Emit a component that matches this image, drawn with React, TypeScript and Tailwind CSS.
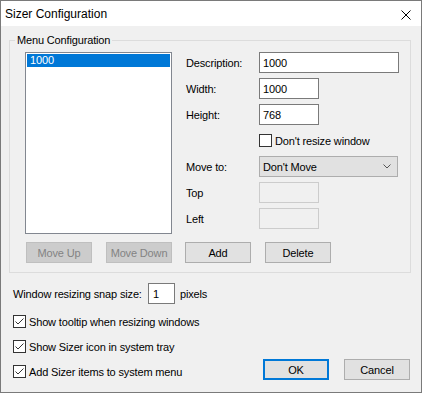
import React from "react";

const Check = ({ checked }: { checked: boolean }) => (
  <div className="w-[13px] h-[13px] border border-[#333333] bg-white flex items-center justify-center shrink-0">
    {checked && (
      <svg width="11" height="11" viewBox="0 0 11 11">
        <path d="M1.5 5.5 L4 8 L9.5 2.5" fill="none" stroke="#333333" strokeWidth="1" />
      </svg>
    )}
  </div>
);

const Btn = ({ label, disabled, w = "w-[66px]", cls = "" }: { label: string; disabled?: boolean; w?: string; cls?: string }) => (
  <div
    className={
      "h-[21px] flex items-center justify-center shrink-0 border " +
      w +
      " " +
      (disabled ? "bg-[#cccccc] border-[#bfbfbf] text-[#838383]" : "bg-[#e1e1e1] border-[#adadad] text-black") +
      " " +
      cls
    }
  >
    {label}
  </div>
);

export default function App() {
  return (
    <div
      className="w-[422px] h-[393px] border border-[#7a7a7a] bg-[#f0f0f0] flex flex-col text-[11px] leading-[14px] tracking-[-0.15px] text-black"
      style={{ fontFamily: '"Liberation Sans", Arial, sans-serif' }}
    >
      {/* Title bar */}
      <div className="h-[25px] bg-white flex items-center pl-[4px] pr-[10px] shrink-0">
        <span className="text-[12px] leading-[16px] mt-[1px] tracking-normal">Sizer Configuration</span>
        <svg className="ml-auto mt-[2px]" width="10" height="10" viewBox="0 0 10 10">
          <path d="M0.5 0.5 L9.5 9.5 M9.5 0.5 L0.5 9.5" stroke="#000" strokeWidth="1" />
        </svg>
      </div>

      {/* Body */}
      <div className="flex-1 flex flex-col">
        <fieldset className="mt-[7px] ml-[8px] w-[402px] border border-[#dcdcdc]">
          <legend className="ml-[5px] px-[2px] leading-[14px]">Menu Configuration</legend>
          <div className="pl-[15px] pt-[5px] pb-[9px] flex flex-col">
            <div className="flex">
              {/* Listbox */}
              <div className="w-[147px] h-[182px] border border-[#828790] bg-white p-[1px] shrink-0">
                <div className="h-[13px] bg-[#0078d7] text-white pl-[3px] leading-[13px]">1000</div>
              </div>
              {/* Right column */}
              <div className="ml-[14px] flex flex-col gap-[5px]">
                <div className="h-[21px] flex items-center">
                  <span className="w-[73px]">Description:</span>
                  <div className="w-[140px] h-[21px] border border-[#7a7a7a] bg-white pl-[3px] flex items-center">1000</div>
                </div>
                <div className="h-[21px] flex items-center">
                  <span className="w-[73px]">Width:</span>
                  <div className="w-[60px] h-[21px] border border-[#7a7a7a] bg-white pl-[3px] flex items-center">1000</div>
                </div>
                <div className="h-[21px] flex items-center">
                  <span className="w-[73px]">Height:</span>
                  <div className="w-[60px] h-[21px] border border-[#7a7a7a] bg-white pl-[3px] flex items-center">768</div>
                </div>
                <div className="h-[21px] flex items-center">
                  <span className="w-[73px]" />
                  <Check checked={false} />
                  <span className="ml-[3px]">Don't resize window</span>
                </div>
                <div className="h-[21px] flex items-center">
                  <span className="w-[73px]">Move to:</span>
                  <div className="w-[139px] h-[21px] border border-[#adadad] bg-[#e1e1e1] pl-[3px] pr-[6px] flex items-center">
                    <span>Don't Move</span>
                    <svg className="ml-auto" width="8" height="5" viewBox="0 0 8 5">
                      <path d="M0.5 0.5 L4 4 L7.5 0.5" fill="none" stroke="#555" strokeWidth="1" />
                    </svg>
                  </div>
                </div>
                <div className="h-[21px] flex items-center">
                  <span className="w-[73px]">Top</span>
                  <div className="w-[60px] h-[21px] border border-[#cccccc] bg-[#f0f0f0]" />
                </div>
                <div className="h-[21px] flex items-center">
                  <span className="w-[73px]">Left</span>
                  <div className="w-[60px] h-[21px] border border-[#cccccc] bg-[#f0f0f0]" />
                </div>
              </div>
            </div>
            {/* Buttons row */}
            <div className="flex mt-[8px]">
              <Btn label="Move Up" disabled cls="ml-[1px]" />
              <Btn label="Move Down" disabled cls="ml-[14px]" />
              <Btn label="Add" cls="ml-[13px]" />
              <Btn label="Delete" cls="ml-[14px]" />
            </div>
          </div>
        </fieldset>

        {/* Snap size row */}
        <div className="mt-[10px] ml-[12px] h-[21px] flex items-center">
          <span className="w-[135px]">Window resizing snap size:</span>
          <div className="w-[27px] h-[21px] border border-[#7a7a7a] bg-white pl-[4px] flex items-center">1</div>
          <span className="ml-[5px]">pixels</span>
        </div>

        <div className="mt-[7px] ml-[12px] h-[21px] flex items-center">
          <Check checked />
          <span className="ml-[3px]">Show tooltip when resizing windows</span>
        </div>
        <div className="mt-[4px] ml-[12px] h-[21px] flex items-center">
          <Check checked />
          <span className="ml-[3px]">Show Sizer icon in system tray</span>
        </div>
        <div className="mt-[2px] ml-[12px] mr-[11px] flex items-start">
          <div className="mt-[2px] h-[21px] flex items-center">
            <Check checked />
            <span className="ml-[3px]">Add Sizer items to system menu</span>
          </div>
          <div className="ml-auto w-[66px] h-[21px] border-2 border-[#0078d7] bg-[#e1e1e1] flex items-center justify-center">
            OK
          </div>
          <Btn label="Cancel" cls="ml-[15px]" />
        </div>
      </div>
    </div>
  );
}
